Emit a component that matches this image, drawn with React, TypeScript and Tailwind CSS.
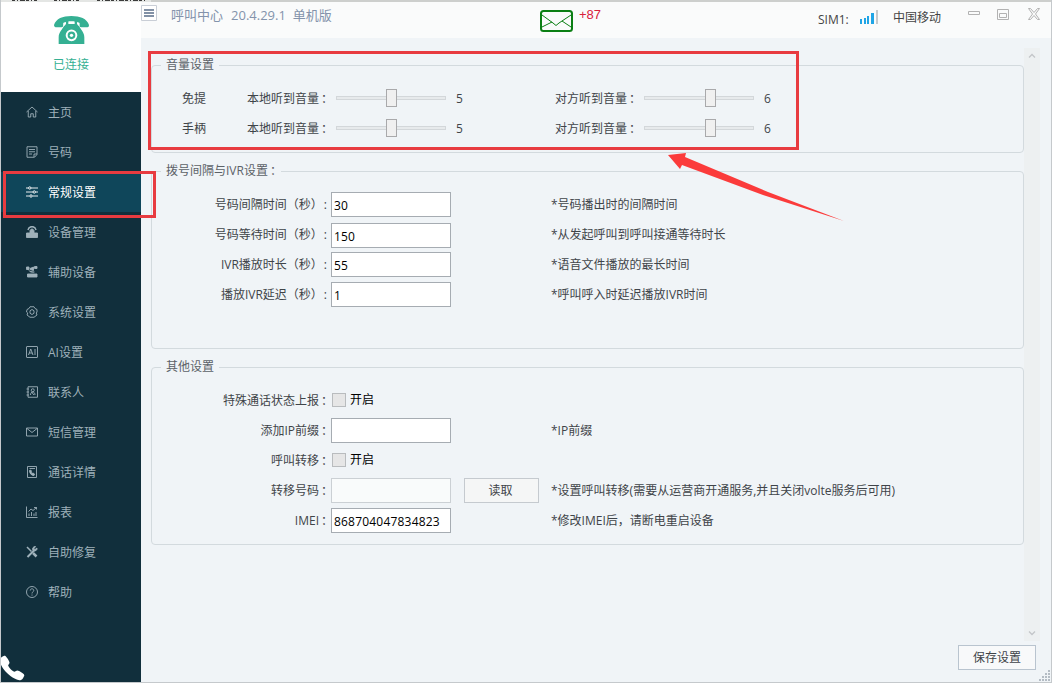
import type { ReactNode } from 'react';
import { IoCall } from 'react-icons/io5';

const icons: Record<string, ReactNode> = {
  home: (
    <>
      <path d="M1 12 12 2l11 10" />
      <path d="M4.500 10v12h5v-6.500h5V22h5V10" />
    </>
  ),
  note: (
    <>
      <path d="M2 1.500h20V17l-5 5.500H2z" />
      <path d="M6 7h12M6 11.500h12M6 16h6" />
      <path d="M16 22v-6h6" />
    </>
  ),
  sliders: (
    <>
      <path d="M0 4h5M10 4h14M0 12h14M19 12h5M0 20h7M13 20h11" />
      <circle cx="7.500" cy="4" r="2.400" />
      <circle cx="16.500" cy="12" r="2.400" />
      <circle cx="10" cy="20" r="2.400" />
    </>
  ),
  device: (
    <>
      <path d="M4 8C6-1 18-1 20 8" strokeWidth="3" />
      <path d="M8 9c2-4 6-4 8 0v5H8z" fill="currentColor" />
      <path d="M1 14h22v9H1z" fill="currentColor" />
    </>
  ),
  helper: (
    <>
      <path d="M1 2h5v5H1zM8 5l7-3v7L8 7zM17 1h5v4h-5z" fill="currentColor" />
      <path d="M6 9c2 3 5 4 11 3M3 16h19v6H3z" fill="currentColor" />
    </>
  ),
  system: (
    <>
      <path d="M8 1.500h8l2 3.500 4 2v5l-1.500 2L22 18l-6 4.500H8L2 18l1.500-4L1 12l1-5 4-2z" />
      <path d="m12 7 4 2.500v5L12 17l-4-2.500v-5z" />
    </>
  ),
  ai: (
    <>
      <rect x="1" y="1" width="22" height="22" rx="1" />
      <path d="m5 18 4.500-12L14 18M6.500 14h6M18 6v12" />
    </>
  ),
  contact: (
    <>
      <path d="M4 1.500h19v21H4zM1 6h5M1 12h5M1 18h5" />
      <circle cx="13.500" cy="8.500" r="3" />
      <path d="M9 18c0-8 9-8 9 0M11 12l5 6" />
    </>
  ),
  mail: (
    <>
      <path d="M1 4h22v16H1z" />
      <path d="m2 5 10 8L22 5" />
    </>
  ),
  detail: (
    <>
      <path d="M3 1h18v22H3z" />
      <path d="M7 5h11" />
      <path d="M7 9c0 6 4 10 9 10l1-3-3-2-2 1-2-3 1-2-2-2z" fill="currentColor" />
    </>
  ),
  report: (
    <>
      <path d="M1 1v22h22" />
      <path d="m5 11 5-5 4 3 7-6M16 3h5v4M6 15v5M11 12v8M16 15v5M20 12v8" />
    </>
  ),
  repair: (
    <>
      <path d="m3 22 14-14" strokeWidth="4" />
      <path d="M22 4l-4 3-2-2 3-4c-5 0-7 4-5 8 4 2 9 0 8-5z" fill="currentColor" />
      <path d="M2 2l9 9" strokeWidth="3" />
      <path d="m14 14 7 7" strokeWidth="5" />
    </>
  ),
  help: (
    <>
      <circle cx="12" cy="12" r="11" />
      <path d="M8.500 9c0-4.500 7-4.500 7 0 0 3-3.500 2.500-3.500 6M12 17v2.200" />
    </>
  ),
};

const menu = [
  { icon: 'home', title: '主页' },
  { icon: 'note', title: '号码' },
  { icon: 'sliders', title: '常规设置' },
  { icon: 'device', title: '设备管理' },
  { icon: 'helper', title: '辅助设备' },
  { icon: 'system', title: '系统设置' },
  { icon: 'ai', title: 'AI设置' },
  { icon: 'contact', title: '联系人' },
  { icon: 'mail', title: '短信管理' },
  { icon: 'detail', title: '通话详情' },
  { icon: 'report', title: '报表' },
  { icon: 'repair', title: '自助修复' },
  { icon: 'help', title: '帮助' },
];

const Sidebar = () => {
  const current = '常规设置';
  return (
    <div className="w-[140px] shrink-0 flex flex-col bg-[#112f3c]">
      <div className="h-[90px] bg-white flex flex-col items-center pt-[14px]">
        <svg width="35" height="28" viewBox="0 0 105 84" fill="#35b093">
          <path d="M0 27C6 8 26 0 52 0s47 8 53 27c0 6-3 7-8 7H82c-6 0-6-5-6-13-12-7-36-7-48 0 0 8 0 13-6 13H8c-5 0-8-2-8-7z" />
          <path d="M36 15h7v9h19v-9h7v9l5 4c5 12 17 20 17 36v20H14V64c0-16 12-24 17-36l5-4z" />
          <path d="M29 20h5v7l-5 4zM71 20h5v11l-5-4z" fill="#ffffff" />
          <circle cx="52.500" cy="58" r="14.500" fill="none" stroke="#ffffff" strokeWidth="6" />
          <circle cx="52.500" cy="58" r="5" fill="#ffffff" />
        </svg>
        <div className="mt-[12px] text-[12px] leading-[18px] text-[#35b093]">已连接</div>
      </div>
      {menu.map((item) => (
        <div
          key={item.title}
          className={`h-[40px] flex items-center pl-[25px] gap-[10px] ${
            item.title == current ? 'bg-[#0f465a] text-white' : 'text-[#9fb1ba]'
          }`}
        >
          <svg
            width="12"
            height="12"
            viewBox="0 0 24 24"
            fill="none"
            stroke="currentColor"
            strokeWidth="1.800"
          >
            {icons[item.icon]}
          </svg>
          <span className="pt-[2px]">{item.title}</span>
        </div>
      ))}
      <div className="mt-auto h-[28px] text-white">
        <IoCall className="w-[28px] h-[28px] -ml-[3px]" />
      </div>
    </div>
  );
};

const Header = () => (
  <div className="h-[36px] bg-[#fafbfb] flex items-start">
    <svg className="mt-[3px]" width="16" height="16" viewBox="0 0 16 16">
      <path d="M.5.5h15v15H.5z" fill="#ffffff" stroke="#c9ced6" />
      <path d="M3 4h10v2H3zM3 7h10v2H3zM3 10h10v2H3z" fill="#8291a6" />
    </svg>
    <div className="ml-[14px] mt-[3px] w-[368px] flex gap-[8px] text-[13px] leading-[20px] text-[#8393ab]">
      <span>呼叫中心</span>
      <span className="-mr-[1px]">20.4.29.1</span>
      <span>单机版</span>
    </div>
    <svg className="mt-[7px]" width="35" height="24" viewBox="0 0 35 24" fill="none" stroke="#0b7f14">
      <rect x="2" y="2" width="31" height="20" rx="2.500" strokeWidth="2" />
      <path d="m3 6 11 8 3 2.500 3-2.500L32 6M3 18l10-5M32 18l-9-6" strokeWidth="1" />
    </svg>
    <div className="ml-[5px] mt-[3px] w-[239px] text-[13px] leading-[20px] text-[#d8213b] font-['Liberation_Sans',sans-serif]">
      +87
    </div>
    <div className="w-[42px] mt-[8px] leading-[20px] text-[#444]">SIM1:</div>
    <svg className="mt-[8px]" width="19" height="15" viewBox="0 0 19 15">
      <path d="M0 9h2v5H0zM4 8h2v6H4zM7 6h2v8H7zM11 3h3v11h-3z" fill="#1fa5e6" />
      <path d="M16 0h2v14h-2z" fill="#c5c9cc" />
    </svg>
    <div className="ml-[14px] mt-[6px] w-[75px] leading-[20px] text-[#444]">中国移动</div>
    <svg className="mt-[5px]" width="75" height="14" viewBox="0 0 75 14" fill="none" stroke="#b2b2b2">
      <path d="M.5 4.500h11v3H.5z" />
      <path d="M29.500 2.500h11v10h-11zM31.500 6.500h7v4h-7z" />
      <path d="M60.500 1.500h2l3.500 4 3.500-4h2l-4 5.500 4 5.500h-2L66 8.500l-3.500 4h-2l4-5.500z" />
    </svg>
  </div>
);

type GroupProps = { title: ReactNode; className: string; children: ReactNode };

const Group = ({ title, className, children }: GroupProps) => (
  <fieldset className={`w-[873px] border border-[#d3dade] rounded-[4px] pl-[9px] ${className}`}>
    <legend className="h-[18px] leading-[17px] px-[5px] text-[#5c6268]">{title}</legend>
    {children}
  </fieldset>
);

const Colon = () => <span className="inline-block w-[12px] pl-[2px]">：</span>;

const Slider = ({ value }: { value: number }) => (
  <div className="w-[110px] h-[18px] flex items-center relative">
    <div className="w-full h-[4px] border border-[#d3d7da] bg-[#e7eaec]"></div>
    <div
      className="absolute top-0 w-[11px] h-[18px] border border-[#a9a9ab] bg-[#f0f0f0]"
      style={{ left: value * 11 - 5 }}
    ></div>
  </div>
);

const VolumeRow = ({ title }: { title: string }) => (
  <div className="h-[30px] flex items-center pl-[21px]">
    <div className="w-[65px] pt-[2px]">{title}</div>
    <div className="w-[89px] pt-[2px] whitespace-nowrap">
      本地听到音量
      <Colon />
    </div>
    <Slider value={5} />
    <div className="w-[109px] pl-[10px] pt-[2px]">5</div>
    <div className="w-[89px] pt-[2px] whitespace-nowrap">
      对方听到音量
      <Colon />
    </div>
    <Slider value={6} />
    <div className="pl-[10px] pt-[2px]">6</div>
  </div>
);

type RowProps = { label: string; seconds?: boolean; hint?: string; children: ReactNode };

const Row = ({ label, seconds, hint, children }: RowProps) => (
  <div className="h-[30px] flex">
    <div
      className={`w-[170px] text-right whitespace-nowrap ${
        seconds ? 'leading-[29px] pr-[4px]' : 'leading-[31px]'
      }`}
    >
      {label}
      {seconds ? <span className="pl-px">:</span> : <Colon />}
    </div>
    <div className="w-[220px] flex items-start gap-[13px]">{children}</div>
    <div className={`whitespace-nowrap ${seconds ? 'leading-[29px]' : 'leading-[31px]'}`}>
      {hint}
    </div>
  </div>
);

const Input = ({ value, className }: { value: string; className: string }) => (
  <input
    readOnly
    value={value}
    className={`w-[120px] h-[25px] border pl-[2px] pt-[2px] text-[12px] tracking-[0.2px] text-black outline-none ${className}`}
  />
);

const Toggle = () => (
  <label className="h-[30px] ml-px flex items-center gap-[4px] text-black">
    <span className="w-[14px] h-[14px] border border-[#b9bcbe] bg-[#e6e6e6]"></span>
    <span className="leading-[16px]">开启</span>
  </label>
);

const ScrollBar = () => (
  <div className="w-[16px] h-[593px] bg-[#edf0f1] flex flex-col justify-between items-center py-[5px]">
    <svg width="8" height="5" viewBox="0 0 8 5" fill="none" stroke="#c3c6c9" strokeWidth="1.300">
      <path d="m1 4.500 3-3 3 3" />
    </svg>
    <svg width="8" height="5" viewBox="0 0 8 5" fill="none" stroke="#c3c6c9" strokeWidth="1.300">
      <path d="m1 .5 3 3 3-3" />
    </svg>
  </div>
);

const enabled = 'bg-white border-[#a6acb2]';

export default function App() {
  return (
    <div className="w-[1052px] h-[683px] overflow-hidden relative flex border-x border-b border-[#c5c9cc] text-[12px] text-[#3f4449] bg-[#cdcfcd] font-['Open_Sans','Noto_Sans_CJK_SC',sans-serif]">
      <div className="w-full pt-[2px] flex">
        <Sidebar />
        <div className="grow flex flex-col bg-[#f0f4f7]">
          <Header />
          <div className="flex pl-[10px] pt-[10px]">
            <div className="w-[873px] pt-[8px] flex flex-col gap-[9px]">
              <Group title="音量设置" className="h-[97px]">
                <div className="pt-[9px]">
                  <VolumeRow title="免提" />
                  <VolumeRow title="手柄" />
                </div>
              </Group>
              <Group
                title={
                  <span className="flex w-[110px] whitespace-nowrap">
                    拨号间隔与IVR设置
                    <Colon />
                  </span>
                }
                className="h-[187px]"
              >
                <div className="pt-[10px]">
                  <Row seconds label="号码间隔时间（秒）" hint="*号码播出时的间隔时间">
                    <Input value="30" className={`mt-[2px] ${enabled}`} />
                  </Row>
                  <Row seconds label="号码等待时间（秒）" hint="*从发起呼叫到呼叫接通等待时长">
                    <Input value="150" className={`mt-[3px] ${enabled}`} />
                  </Row>
                  <Row seconds label="IVR播放时长（秒）" hint="*语音文件播放的最长时间">
                    <Input value="55" className={`mt-[2px] ${enabled}`} />
                  </Row>
                  <Row seconds label="播放IVR延迟（秒）" hint="*呼叫呼入时延迟播放IVR时间">
                    <Input value="1" className={`mt-[2px] ${enabled}`} />
                  </Row>
                </div>
              </Group>
              <Group title="其他设置" className="h-[187px]">
                <div className="pt-[9px]">
                  <Row label="特殊通话状态上报">
                    <Toggle />
                  </Row>
                  <Row label="添加IP前缀" hint="*IP前缀">
                    <Input value="" className={`mt-[3px] ${enabled}`} />
                  </Row>
                  <Row label="呼叫转移">
                    <Toggle />
                  </Row>
                  <Row
                    label="转移号码"
                    hint="*设置呼叫转移(需要从运营商开通服务,并且关闭volte服务后可用)"
                  >
                    <Input value="" className="mt-[3px] bg-[#f9fbfb] border-[#cbd0d4]" />
                    <button className="mt-[3px] w-[75px] h-[25px] pt-px pr-[2px] border border-[#c5cacf] bg-[#f5f6f6]">
                      读取
                    </button>
                  </Row>
                  <Row label="IMEI" hint="*修改IMEI后，请断电重启设备">
                    <Input value="868704047834823" className={`mt-[3px] ${enabled}`} />
                  </Row>
                </div>
              </Group>
            </div>
            <ScrollBar />
          </div>
          <div className="grow flex justify-end items-end">
            <button className="w-[78px] h-[25px] mb-[12px] border border-[#b9c4cf] bg-[#f8f9fa]">
              保存设置
            </button>
            <svg className="ml-[3px]" width="12" height="12" viewBox="0 0 12 12" fill="#b4bcc4">
              <path d="M9 0h2v2H9zM6 3h2v2H6zM9 3h2v2H9zM3 6h2v2H3zM6 6h2v2H6zM9 6h2v2H9zM0 9h2v2H0zM3 9h2v2H3zM6 9h2v2H6zM9 9h2v2H9z" />
            </svg>
          </div>
        </div>
      </div>

      {/* what shows of the window behind, along the top and bottom edges */}
      <svg className="absolute left-0 top-0" width="150" height="2" viewBox="0 0 150 2" fill="none">
        <path d="M0 1h150" stroke="#e4e6e4" strokeWidth="2" />
        <path d="M11 .5h25M53 .5h25M96 .5h48" stroke="#3c3c3c" strokeDasharray="3 2 1 2 5 1" />
      </svg>
      <svg
        className="absolute left-[204px] -bottom-px"
        width="436"
        height="1"
        viewBox="0 0 436 1"
        fill="none"
      >
        <path d="M2 .5h42M416 .5h14" stroke="#4a4a4e" strokeDasharray="7 1 4 1" />
      </svg>

      {/* callouts drawn over the window */}
      <div className="absolute left-[2px] top-[171px] w-[153px] h-[47px] border-[3px] border-[#e83b40]"></div>
      <div className="absolute left-[147px] top-[51px] w-[651px] h-[99px] border-[3px] border-[#e83b40]"></div>
      <svg
        className="absolute left-[667px] top-[152px]"
        width="178"
        height="70"
        viewBox="0 0 178 70"
        fill="#fb3b3b"
      >
        <path d="M0 3 18 1l-1 4 83 35 76 29-81-26-81-30-2 4z" />
      </svg>
    </div>
  );
}
